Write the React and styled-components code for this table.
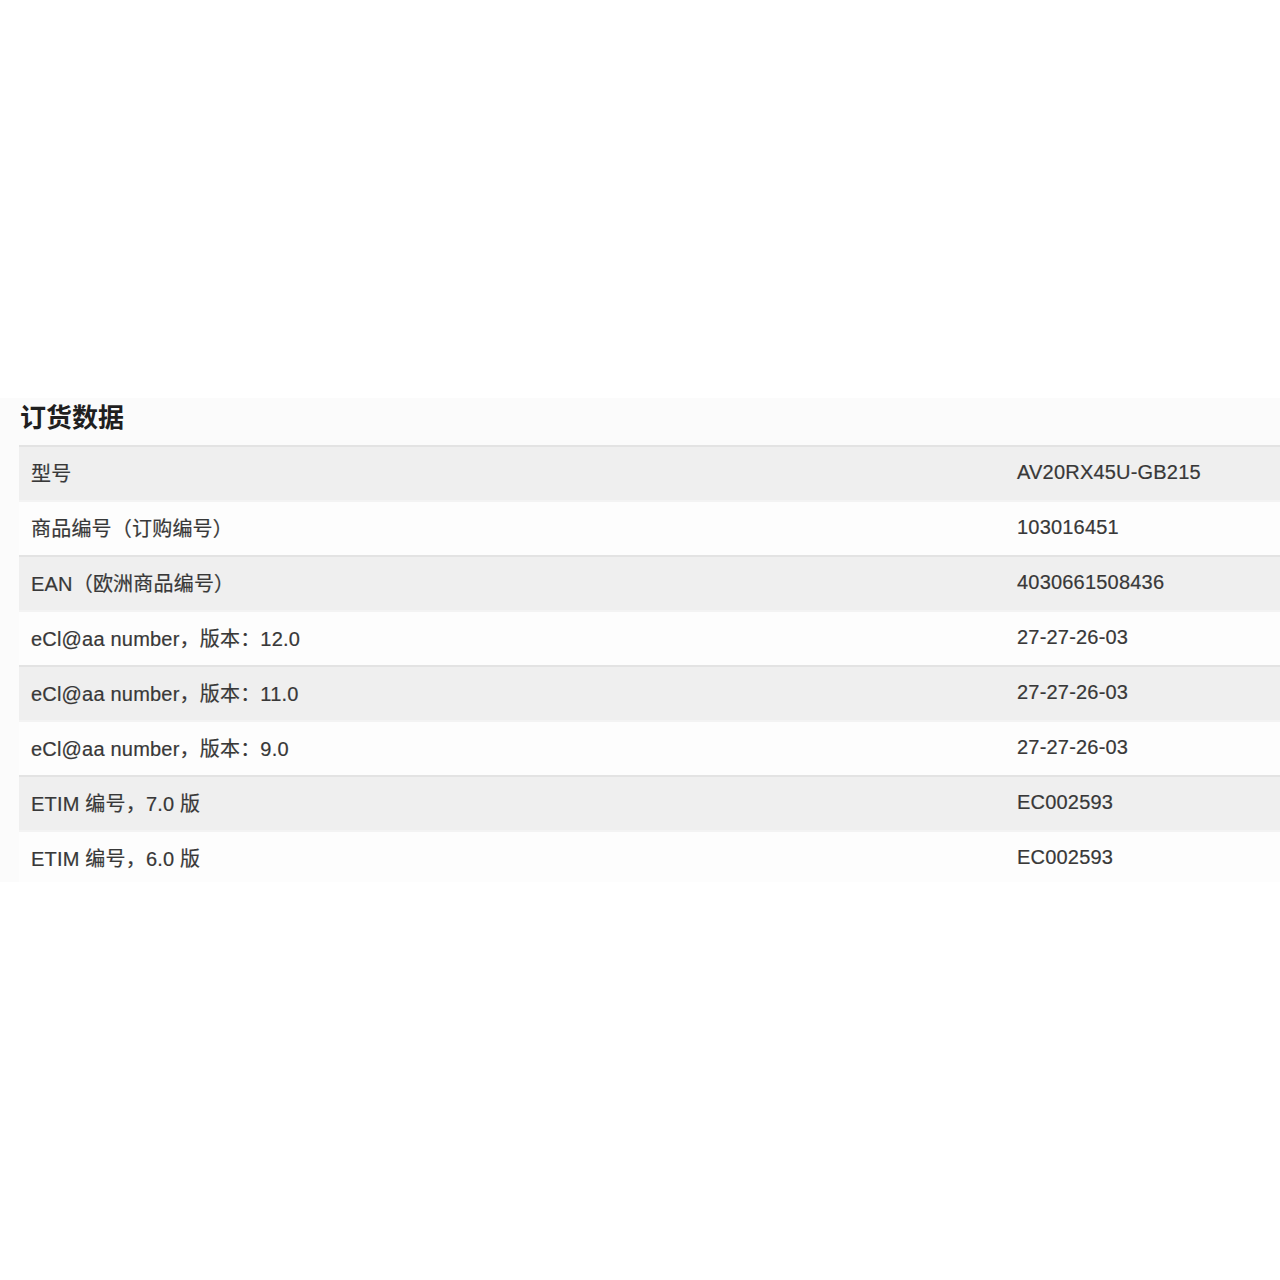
import React from "react";
import styled, { createGlobalStyle } from "styled-components";

const GlobalStyle = createGlobalStyle`
  html, body {
    margin: 0;
    padding: 0;
    background: #ffffff;
  }
  body {
    font-family: "Liberation Sans", "Noto Sans CJK SC", sans-serif;
    color: #333;
  }
`;

const Page = styled.div`
  width: 1280px;
  height: 1280px;
  padding-top: 398px;
  box-sizing: border-box;
  background: #ffffff;
`;

const Panel = styled.section`
  background: #fbfbfb;
  padding-left: 19px;
  height: 484px;
  overflow: hidden;
`;

const Title = styled.h2`
  margin: 0;
  height: 47px;
  box-sizing: border-box;
  padding: 0 0 12px 1px;
  display: flex;
  align-items: center;
  font-size: 26px;
  font-weight: 700;
  color: #1f1f1f;
  font-family: "Liberation Sans", "Noto Sans CJK SC", sans-serif;
`;

const Table = styled.div`
  display: flex;
  flex-direction: column;
`;

const Row = styled.div`
  display: grid;
  grid-template-columns: 986px 1fr;
  height: 55px;
  box-sizing: border-box;
  align-items: center;
  background: ${(p) => (p.$shaded ? "#efefef" : "#fdfdfd")};
  border-top: 2px solid ${(p) => (p.$shaded ? "#e3e3e3" : "#f3f3f3")};
`;

const Cell = styled.div`
  padding-left: 12px;
  padding-bottom: 2px;
  font-size: 20px;
  color: #383838;
  white-space: nowrap;
  letter-spacing: 0.2px;
  -webkit-text-stroke: 0.2px #383838;
`;

const rows = [
  ["型号", "AV20RX45U-GB215"],
  ["商品编号（订购编号）", "103016451"],
  ["EAN（欧洲商品编号）", "4030661508436"],
  ["eCl@aa number，版本：12.0", "27-27-26-03"],
  ["eCl@aa number，版本：11.0", "27-27-26-03"],
  ["eCl@aa number，版本：9.0", "27-27-26-03"],
  ["ETIM 编号，7.0 版", "EC002593"],
  ["ETIM 编号，6.0 版", "EC002593"],
];

export default function App() {
  return (
    <>
      <GlobalStyle />
      <Page>
        <Panel>
          <Title>订货数据</Title>
          <Table>
            {rows.map(([label, value], i) => (
              <Row key={i} $shaded={i % 2 === 0}>
                <Cell>{label}</Cell>
                <Cell>{value}</Cell>
              </Row>
            ))}
          </Table>
        </Panel>
      </Page>
    </>
  );
}
